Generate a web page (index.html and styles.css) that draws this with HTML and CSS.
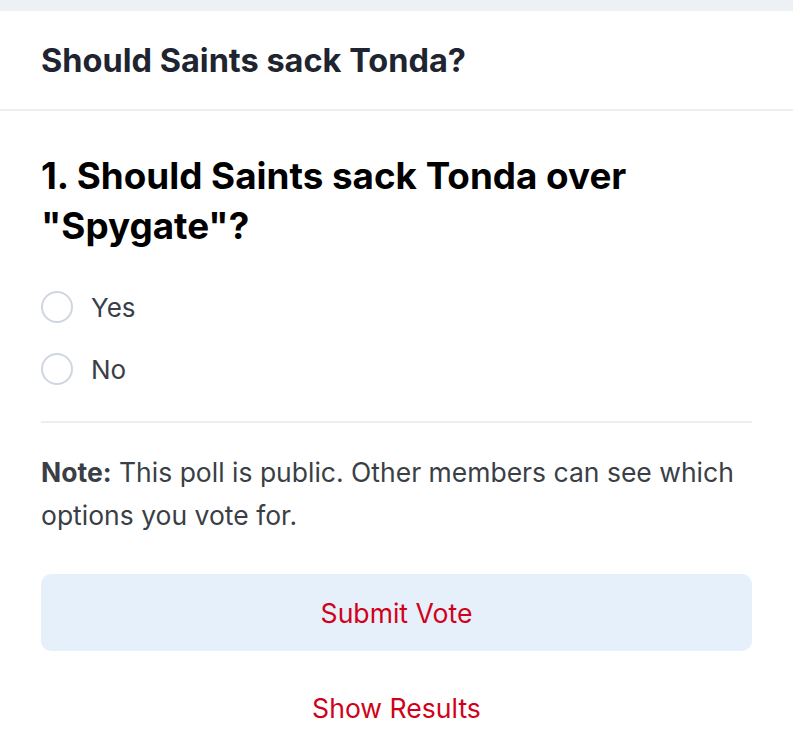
FILE: index.html
```html
<!DOCTYPE html>
<html lang="en">
<head>
    <meta charset="UTF-8">
    <meta name="viewport" content="width=device-width, initial-scale=1.0">
    <title>Should Saints sack Tonda?</title>
    <link rel="stylesheet" href="styles.css">
</head>
<body>

    <div class="poll">
        <div class="poll-header">
            <h1>Should Saints sack Tonda?</h1>
        </div>

        <div class="poll-body">
            <h2>1. Should Saints sack Tonda over "Spygate"?</h2>

            <div class="options">
                <label class="option">
                    <span class="radio"></span>
                    <span>Yes</span>
                </label>
                <label class="option">
                    <span class="radio"></span>
                    <span>No</span>
                </label>
            </div>

            <p class="note"><strong>Note:</strong> This poll is public. Other members can see which options you vote for.</p>

            <button class="submit">Submit Vote</button>
            <button class="results">Show Results</button>
        </div>
    </div>

</body>
</html>
```

FILE: styles.css
```css
body {
    font-family: 'Inter', 'Roboto', sans-serif;
    background-color: #edf0f5;
    color: #1e2430;
    margin: 0;
    padding: 11px 0 0;
}
.poll {
    background-color: #fff;
    min-height: 739px;
}
.poll-header {
    height: 98px;
    display: flex;
    align-items: center;
    padding: 0 41px;
    border-bottom: 2px solid #eceef1;
}
h1 {
    font-size: 32.5px;
    font-weight: 700;
    margin: 0;
}
.poll-body {
    padding: 0 41px;
}
h2 {
    font-size: 36.8px;
    font-weight: 700;
    line-height: 50px;
    color: #000;
    margin: 40px 0 0;
}
.options {
    display: flex;
    flex-direction: column;
    gap: 30px;
    padding: 40px 0 36px;
    border-bottom: 2px solid #eceef1;
}
.option {
    display: flex;
    align-items: center;
    gap: 18px;
    font-size: 26px;
    color: #3a3f47;
}
.radio {
    width: 28px;
    height: 28px;
    border: 2px solid #cfd6e0;
    border-radius: 50%;
}
.note {
    font-size: 26.5px;
    line-height: 43px;
    color: #3a3f47;
    margin: 28px 0 37px;
}
.note strong {
    color: #3a3f47;
}
button {
    display: block;
    width: 100%;
    font-family: inherit;
    font-size: 26.6px;
    color: #d0021b;
    border: none;
    cursor: pointer;
}
.submit {
    height: 77px;
    background-color: #e6f0fa;
    border-radius: 10px;
}
.results {
    height: 60px;
    margin-top: 27px;
    background: none;
}
```
